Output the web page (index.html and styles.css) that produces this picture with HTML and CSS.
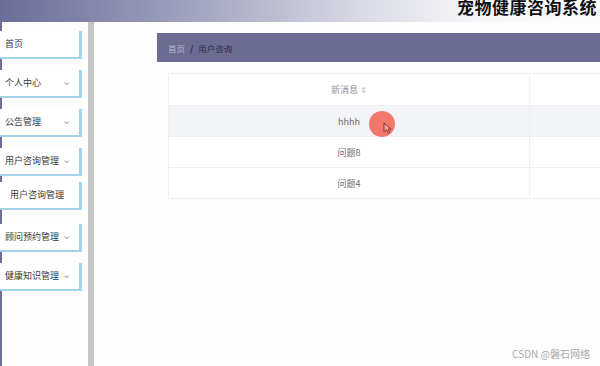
FILE: index.html
```html
<!DOCTYPE html>
<html lang="zh-CN">
<head>
  <meta charset="UTF-8">
  <title>宠物健康咨询系统</title>
  <link rel="stylesheet" href="styles.css">
</head>
<body>
  <header class="topbar">
    <h1 class="title">宠物健康咨询系统</h1>
  </header>

  <div class="layout">
    <aside class="sidebar">
      <div class="menu-item">首页</div>
      <div class="menu-item">个人中心 <span class="arrow">&#8964;</span></div>
      <div class="menu-item">公告管理 <span class="arrow">&#8964;</span></div>
      <div class="menu-item open">用户咨询管理 <span class="arrow">&#8964;</span></div>
      <div class="menu-item sub">用户咨询管理</div>
      <div class="menu-item">顾问预约管理 <span class="arrow">&#8964;</span></div>
      <div class="menu-item">健康知识管理 <span class="arrow">&#8964;</span></div>
    </aside>
    <div class="divider"></div>

    <main class="content">
      <div class="breadcrumb">
        <span class="crumb-home">首页</span>
        <span class="crumb-sep">/</span>
        <span class="crumb-current">用户咨询</span>
      </div>

      <table class="data-table">
        <thead>
          <tr>
            <th class="col-msg">新消息 <span class="sort">&#8661;</span></th>
            <th></th>
          </tr>
        </thead>
        <tbody>
          <tr class="hover">
            <td>hhhh</td>
            <td></td>
          </tr>
          <tr>
            <td>问题8</td>
            <td></td>
          </tr>
          <tr>
            <td>问题4</td>
            <td></td>
          </tr>
        </tbody>
      </table>
    </main>
  </div>

  <!-- screen recording cursor highlight -->
  <div class="cursor-dot">
    <svg class="cursor" width="9" height="12" viewBox="0 0 9 12">
      <path d="M1 1 L1 10 L3.5 7.8 L5.2 11 L6.6 10.3 L5 7.2 L8 7.2 Z" fill="#f4a39a" stroke="#7a1f1a" stroke-width="0.8"/>
    </svg>
  </div>

  <div class="watermark">CSDN @磐石网络</div>
</body>
</html>
```

FILE: styles.css
```css
body {
  margin: 0;
  font-family: "Noto Sans CJK SC", "Noto Sans", sans-serif;
  background-color: #fdfdfd;
  width: 600px;
  height: 366px;
  overflow: hidden;
  position: relative;
}

.topbar {
  height: 22px;
  background: linear-gradient(to right, #6c6d97 0%, #9d9fbd 30%, #d9d9e4 60%, #f7f7fa 80%, #fdfdfd 100%);
  overflow: hidden;
  display: flex;
  justify-content: flex-end;
}

.title {
  margin: -5px 3px 0 0;
  font-size: 17px;
  font-weight: bold;
  color: #111;
  line-height: 24px;
  letter-spacing: 0.5px;
}

.layout {
  display: flex;
  height: 344px;
}

.sidebar {
  width: 86px;
  padding-top: 9px;
  background-color: #fdfdfd;
  border-left: 2px solid #6d6f99;
  box-sizing: content-box;
}

.menu-item {
  position: relative;
  width: 74px;
  height: 26px;
  margin-left: -2px;
  margin-bottom: 11px;
  padding-left: 5px;
  background-color: #fff;
  border-right: 3px solid #a3d2ea;
  border-bottom: 2px solid #a3d2ea;
  font-size: 9px;
  line-height: 26px;
  color: #3a3a3a;
  display: flex;
  align-items: center;
  justify-content: space-between;
  box-sizing: content-box;
}

.menu-item.open {
  margin-bottom: 6px;
}

.menu-item.sub {
  padding-left: 10px;
  width: 69px;
  margin-bottom: 14px;
}

.arrow {
  color: #aaa;
  font-size: 11px;
  margin-right: 8px;
  line-height: 1;
  transform: translateY(-3px);
}

.divider {
  width: 6px;
  background-color: #c6c6c6;
}

.content {
  flex: 1;
  padding: 11px 0 0 63px;
  background-color: #fdfdfd;
  overflow: hidden;
}

.breadcrumb {
  height: 29px;
  background-color: #6c6c93;
  display: flex;
  align-items: center;
  padding-left: 11px;
  font-size: 8.5px;
  gap: 5px;
  white-space: nowrap;
}

.crumb-home {
  color: #b9b9cc;
}

.crumb-sep {
  color: #2b2b3c;
  font-weight: bold;
}

.crumb-current {
  color: #2d2d40;
}

.data-table {
  width: 560px;
  table-layout: fixed;
  margin: 11px 0 0 11px;
  border-collapse: collapse;
  background-color: #fff;
  font-size: 9px;
  color: #6a6c70;
}

.data-table th,
.data-table td {
  border: 1px solid #eeeff3;
  text-align: center;
  height: 30px;
  padding: 0;
  font-weight: normal;
}

.data-table th {
  height: 31px;
  color: #8f9196;
}

.data-table th:first-child,
.data-table td:first-child {
  width: 360px;
}

.sort {
  color: #b7b7b7;
  font-size: 8px;
}

.data-table tr.hover td {
  background-color: #f3f4f7;
}

.cursor-dot {
  position: absolute;
  left: 369px;
  top: 111px;
  width: 26px;
  height: 26px;
  border-radius: 50%;
  background-color: #f2786c;
}

.cursor {
  position: absolute;
  left: 14px;
  top: 11px;
}

.watermark {
  position: absolute;
  right: 10px;
  bottom: 5px;
  font-size: 10px;
  color: #a9a9a9;
  text-shadow: 0 0 2px #fff;
}
```
